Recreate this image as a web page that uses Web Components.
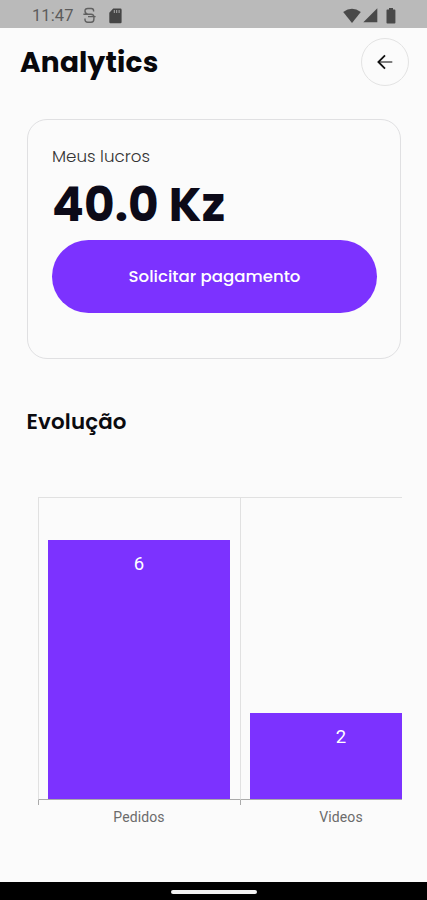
<!DOCTYPE html>
<html lang="pt">
<head>
<meta charset="utf-8">
<title>Analytics</title>
<style>
html,body{margin:0;padding:0;background:#fbfbfb}
</style>
</head>
<body>
<analytics-app></analytics-app>
<script>
function define(name, html) {
  customElements.define(name, class extends HTMLElement {
    constructor() {
      super();
      const t = document.createElement('template');
      t.innerHTML = html;
      this.attachShadow({mode: 'open'}).append(t.content.cloneNode(true));
    }
  });
}

define('status-bar', `
<style>
:host{display:flex;align-items:center;justify-content:space-between;box-sizing:border-box;height:28px;background:#bababa;color:#5c5c5c;padding:3px 31.5px 0 32px;font:400 16.5px/24px Roboto,sans-serif}
.left,.right{display:flex;align-items:center}
.time{width:51px;letter-spacing:.1px;white-space:nowrap}
svg{display:block}
</style>
<div class="left">
  <span class="time">11:47</span>
  <svg width="13" height="17" viewBox="0 0 13 17" fill="none" stroke="#606060" stroke-width="1.4"><path d="M10.6 4.6V3.8Q10.6 1.5 8.3 1.5H4.7Q2 1.5 2 4T4.7 7.2H8Q10.9 7.2 10.9 10V12Q10.9 15.2 8 15.2H4.7Q2 15.2 2 12.6V11.4M.4 7.2H5M5 9.6H12.6"/></svg>
  <svg style="margin-left:13px" width="13" height="16" viewBox="0 0 13 16"><path fill="#454545" d="M4.2.6H11.5Q12.6.6 12.6 1.7V14Q12.6 15.2 11.5 15.2H1.3Q.3 15.2.3 14V4.7Z"/><path stroke="#aaa" stroke-width="1" d="M5.3 2V5M7.7 2V5M10.1 2V5"/></svg>
</div>
<div class="right">
  <svg width="18" height="16" viewBox="0 0 18 16"><path fill="#494949" d="M.2 4Q9-2.6 17.8 4L9 15Z"/></svg>
  <svg style="margin-left:2px" width="15" height="15" viewBox="0 0 15 15"><path fill="#494949" d="M14.3.3V14.3H.3Z"/></svg>
  <svg style="margin-left:8px" width="10" height="16" viewBox="0 0 10 16"><path fill="#494949" d="M3 0H7V1.6H8.6Q9.4 1.6 9.4 2.4V14.7Q9.4 15.5 8.6 15.5H1.3Q.5 15.5.5 14.7V2.4Q.5 1.6 1.3 1.6H3Z"/></svg>
</div>`);

define('round-back', `
<style>
:host{display:flex;box-sizing:border-box;width:48px;height:48px;border:1px solid #e3e3e3;border-radius:50%;align-items:center;justify-content:center}
</style>
<svg width="18" height="18" viewBox="0 0 18 18" fill="none"><path d="M3 9H16.3" stroke="#555" stroke-width="1.5"/><path d="M9 2.4L2.4 9L9 15.6" stroke="#111" stroke-width="1.8"/></svg>`);

define('page-header', `
<style>
:host{display:flex;justify-content:space-between;height:48px;padding:10px 18px 0 20px}
h1{margin:0;font:700 28px/49px Poppins,Inter,sans-serif;letter-spacing:.2px;color:#08080c}
</style>
<h1><slot></slot></h1><round-back></round-back>`);

define('action-button', `
<style>
:host{display:flex;height:73px;border-radius:37px;background:#7c32ff;color:#fff;align-items:center;justify-content:center;font:500 16.6px/24px Poppins,Inter,sans-serif}
</style><span><slot></slot></span>`);

define('earnings-card', `
<style>
:host{display:block;box-sizing:border-box;width:374px;height:240px;margin:33px 0 0 27px;border:1px solid #e0e0e2;border-radius:20px;padding:24px 23px 0 24px}
.label{font:300 16.7px/24px Poppins,Inter,sans-serif;color:#333;height:24px}
.value{font:700 47px/74px Poppins,Inter,sans-serif;letter-spacing:.1px;color:#0c0a18;height:72px;white-space:nowrap}
</style>
<div class="label"><slot name="label"></slot></div>
<div class="value"><slot name="value"></slot></div>
<slot></slot>`);

define('section-title', `
<style>
:host{display:block;margin:46px 0 0 26.5px;font:600 21.4px/34px Poppins,Inter,sans-serif;letter-spacing:.15px;color:#0b0b0f}
</style><slot></slot>`);

define('chart-column', `
<style>
:host{display:grid;grid-template-rows:303px 5px 26px;box-sizing:border-box;width:202px}
.plot{box-sizing:border-box;border-left:1px solid #e1e1e1;border-top:1px solid #e1e1e1;border-bottom:1px solid #aaa;display:flex;align-items:flex-end;padding:0 10px 0 9px}
.bar{width:100%;height:var(--h);background:#7c32ff;color:#fff;text-align:center;font:400 18.5px/21px Roboto,sans-serif;padding-top:14px;box-sizing:border-box}
.tick{border-left:1px solid #aaa}
.name{font:400 14px/18px Roboto,sans-serif;color:#6b6b6b;text-align:center;padding-top:3px;letter-spacing:.1px}
</style>
<div class="plot"><div class="bar"><slot name="value"></slot></div></div>
<div class="tick"></div>
<div class="name"><slot></slot></div>`);

define('bar-chart', `
<style>:host{display:flex;width:364px;overflow:hidden;margin:58px 0 0 38px}::slotted(*){flex:none}</style><slot></slot>`);

define('nav-bar', `
<style>:host{display:flex;justify-content:center;box-sizing:border-box;height:18px;margin-top:auto;background:#000;padding-top:8px}
i{width:86px;height:4px;border-radius:2px;background:#f3f3f3}</style><i></i>`);

define('analytics-app', `
<style>
:host{display:flex;flex-direction:column;width:427px;height:900px;overflow:hidden;background:#fbfbfb}
</style>
<status-bar></status-bar>
<page-header>Analytics</page-header>
<earnings-card><span slot="label">Meus lucros</span><span slot="value">40.0 Kz</span>
<action-button>Solicitar pagamento</action-button></earnings-card>
<section-title>Evolução</section-title>
<bar-chart>
<chart-column style="--h:259px"><span slot="value">6</span>Pedidos</chart-column>
<chart-column style="--h:86px"><span slot="value">2</span>Videos</chart-column>
</bar-chart>
<nav-bar></nav-bar>`);
</script>
</body>
</html>
